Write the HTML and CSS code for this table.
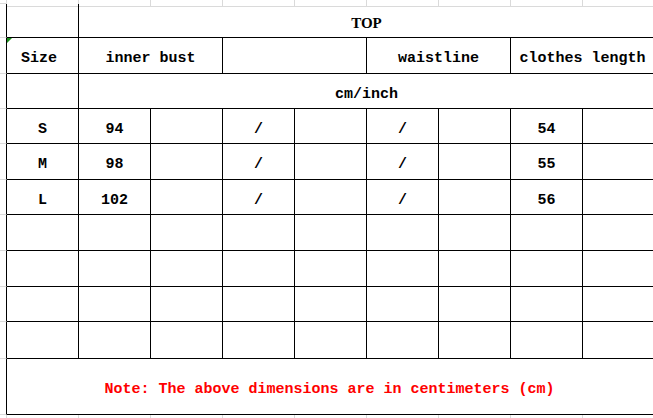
FILE: index.html
```html
<!DOCTYPE html>
<html>
<head>
<meta charset="utf-8">
<link rel="stylesheet" href="styles.css">
</head>
<body>
<div class="sheet">
  <div class="pad g"></div>
  <div class="c g"></div><div class="c g"></div><div class="c g"></div><div class="c g"></div><div class="c g"></div><div class="c g"></div><div class="c g"></div><div class="c g"></div><div class="c g"></div>

  <div class="pad"></div>
  <div class="c"></div>
  <div class="c s8 serif">TOP</div>

  <div class="pad"></div>
  <div class="c mark-cell"><span class="mark"></span>Size</div>
  <div class="c s2">inner bust</div>
  <div class="c s2"></div>
  <div class="c s2">waistline</div>
  <div class="c s2">clothes length</div>

  <div class="pad"></div>
  <div class="c"></div>
  <div class="c s8">cm/inch</div>

  <div class="pad"></div>
  <div class="c">S</div><div class="c">94</div><div class="c"></div><div class="c">/</div><div class="c"></div><div class="c">/</div><div class="c"></div><div class="c">54</div><div class="c"></div>

  <div class="pad"></div>
  <div class="c">M</div><div class="c">98</div><div class="c"></div><div class="c">/</div><div class="c"></div><div class="c">/</div><div class="c"></div><div class="c">55</div><div class="c"></div>

  <div class="pad"></div>
  <div class="c">L</div><div class="c">102</div><div class="c"></div><div class="c">/</div><div class="c"></div><div class="c">/</div><div class="c"></div><div class="c">56</div><div class="c"></div>

  <div class="pad"></div>
  <div class="c"></div><div class="c"></div><div class="c"></div><div class="c"></div><div class="c"></div><div class="c"></div><div class="c"></div><div class="c"></div><div class="c"></div>
  <div class="pad"></div>
  <div class="c"></div><div class="c"></div><div class="c"></div><div class="c"></div><div class="c"></div><div class="c"></div><div class="c"></div><div class="c"></div><div class="c"></div>
  <div class="pad"></div>
  <div class="c"></div><div class="c"></div><div class="c"></div><div class="c"></div><div class="c"></div><div class="c"></div><div class="c"></div><div class="c"></div><div class="c"></div>
  <div class="pad"></div>
  <div class="c"></div><div class="c"></div><div class="c"></div><div class="c"></div><div class="c"></div><div class="c"></div><div class="c"></div><div class="c"></div><div class="c"></div>

  <div class="pad"></div>
  <div class="c s9 note">Note: The above dimensions are in centimeters (cm)</div>

  <div class="pad g"></div>
  <div class="c g nob"></div><div class="c g nob"></div><div class="c g nob"></div><div class="c g nob"></div><div class="c g nob"></div><div class="c g nob"></div><div class="c g nob"></div><div class="c g nob"></div><div class="c g nob"></div>
</div>
</body>
</html>
```

FILE: styles.css
```css
html, body {
  margin: 0;
  padding: 0;
  overflow: hidden;
  background: #ffffff;
}

.sheet {
  display: grid;
  grid-template-columns: 7px repeat(9, 72px);
  grid-template-rows: 4px 34px 36px 35px 35px 36px 35px 36px 36px 35px 37px 56px 4px;
  width: 655px;
}

.c {
  box-sizing: border-box;
  border-right: 1px solid #000;
  border-bottom: 1px solid #000;
  display: flex;
  align-items: center;
  justify-content: center;
  padding-top: 6px;
  font-family: "Liberation Mono", "DejaVu Sans Mono", monospace;
  font-weight: bold;
  font-size: 15px;
  color: #000;
  white-space: nowrap;
}

.pad {
  box-sizing: border-box;
  border-right: 1px solid #000;
  border-bottom: 1px solid #dadada;
}

.g {
  border-right-color: #dadada;
  border-bottom-color: #dadada;
}

.nob {
  border-bottom: none;
}

.s2 { grid-column: span 2; }
.s8 { grid-column: span 8; }
.s9 { grid-column: span 9; }

.serif {
  font-family: "Liberation Serif", "DejaVu Serif", serif;
  font-weight: bold;
  font-size: 15px;
}

.note {
  color: #ff0000;
  padding-right: 2px;
}

.mark-cell {
  position: relative;
  justify-content: flex-start;
  padding-left: 14px;
}

.mark {
  position: absolute;
  left: 0;
  top: 0;
  width: 0;
  height: 0;
  border-top: 5px solid #1a8f1a;
  border-right: 5px solid transparent;
}
```
